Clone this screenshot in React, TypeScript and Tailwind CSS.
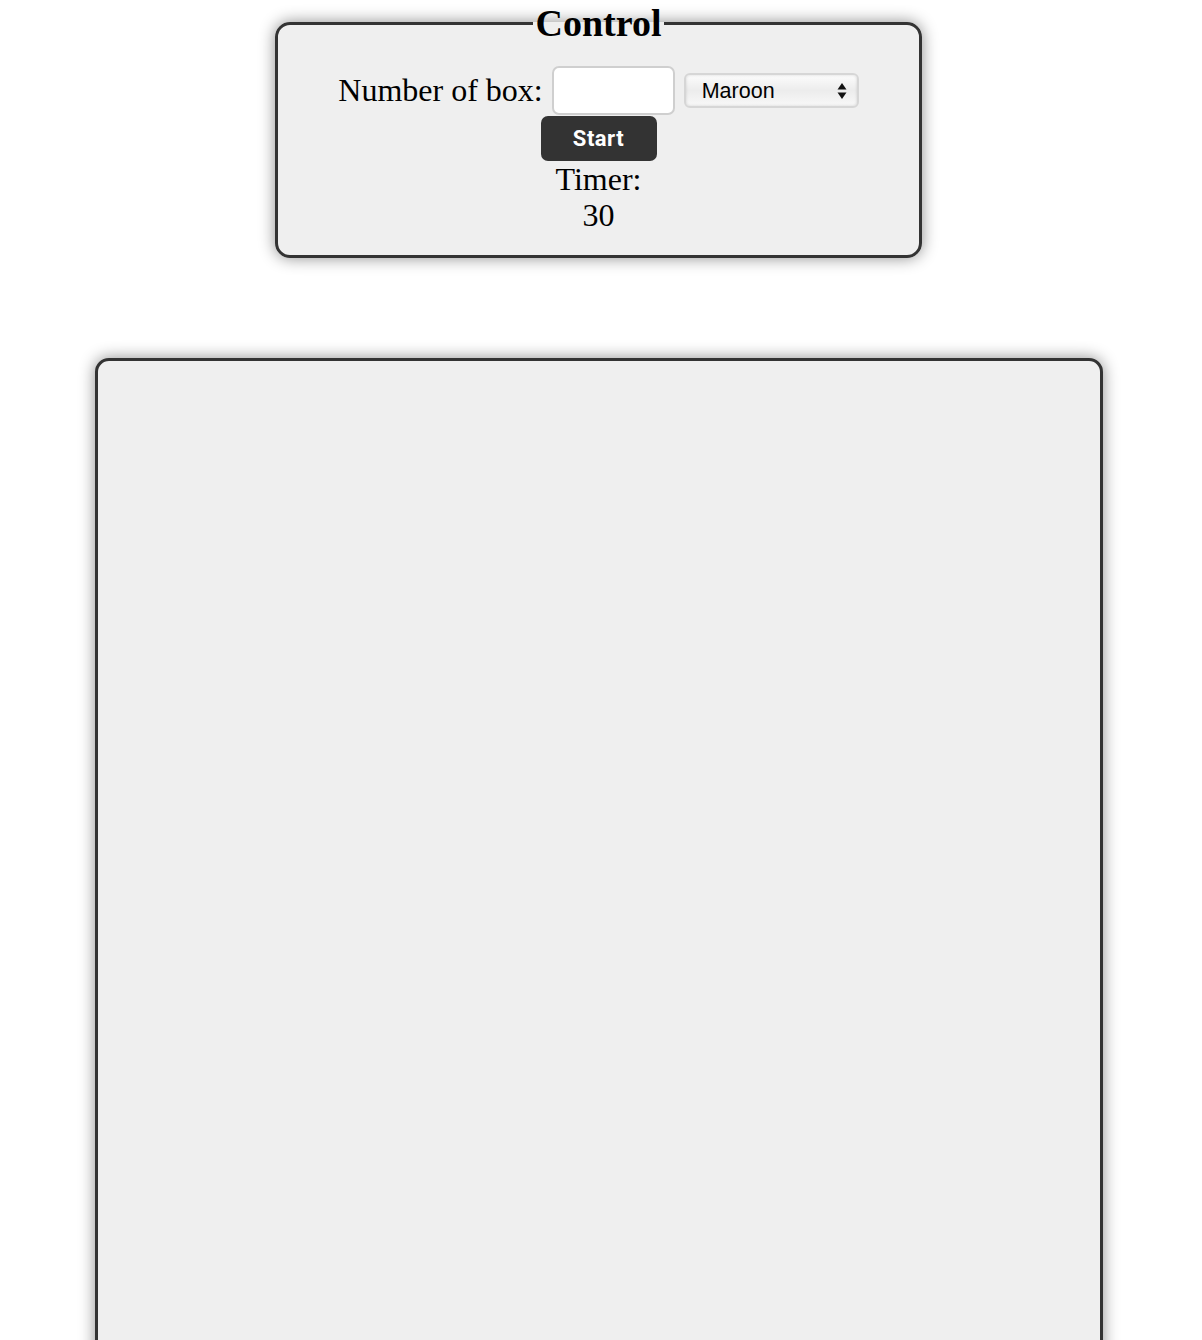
import { useState } from "react";

export default function App() {
    const [count, setCount] = useState("")
    const [colour, setColour] = useState("Maroon")
    const [timer] = useState(30)

    return <div className="min-h-[1340px] bg-white pr-[5px] pb-10 overflow-hidden" style={{ fontFamily: '"Liberation Serif", "Times New Roman", serif' }}>
        {/* control panel */}
        <fieldset className="mx-auto w-[647px] border-[3px] border-[#333] rounded-[15px] bg-[#efefef] shadow-[0_0_16px_rgba(0,0,0,0.45)] px-4 pt-[20px] pb-[22px]">
            <legend className="mx-auto px-[3px] text-[38px] font-bold leading-[46px] text-black">Control</legend>
            <div className="flex items-center justify-center gap-[9px]">
                <label className="text-[32px] leading-[37px] text-black">Number of box:</label>
                <input value={count} onChange={function (e) {
                    setCount(e.target.value)
                }} type="text" className="w-[123px] h-[49px] bg-white border-2 border-[#cfcfcf] rounded-[7px] px-2 text-xl outline-none" />
                <div className="relative w-[175px] h-[35px]">
                    <select value={colour} onChange={function (e) {
                        setColour(e.target.value)
                    }} className="appearance-none w-full h-full rounded-[6px] border-2 border-[#d6d6d6] bg-gradient-to-b from-[#fcfcfc] via-[#ececec] to-[#f8f8f8] pl-[16px] text-[21.5px] text-black shadow-[inset_0_0_3px_rgba(0,0,0,0.15)]" style={{ fontFamily: '"Liberation Sans", Arial, sans-serif' }}>
                        <option>Maroon</option>
                        <option>Navy</option>
                        <option>Teal</option>
                        <option>Olive</option>
                    </select>
                    <svg className="absolute right-[12px] top-[9px] pointer-events-none" width="10" height="18" viewBox="0 0 10 18">
                        <path d="M5 1 L9.5 7.5 L0.5 7.5 Z" fill="#111" />
                        <path d="M5 17 L9.5 10.5 L0.5 10.5 Z" fill="#111" />
                    </svg>
                </div>
            </div>
            <div className="flex justify-center mt-[1px]">
                <button className="w-[116px] h-[45px] bg-[#333] text-white rounded-[7px] text-[22px] font-bold tracking-[0.5px]" style={{ fontFamily: 'Roboto, "Liberation Sans", Arial, sans-serif' }}>Start</button>
            </div>
            <div className="text-center text-[32px] leading-[36px] text-black">
                <div>Timer:</div>
                <div>{timer}</div>
            </div>
        </fieldset>

        {/* play area */}
        <div className="mx-auto mt-[100px] w-[1008px] h-[1100px] border-[3px] border-[#333] rounded-[14px] bg-[#efefef] shadow-[0_0_16px_rgba(0,0,0,0.45)]"></div>
    </div>
}
